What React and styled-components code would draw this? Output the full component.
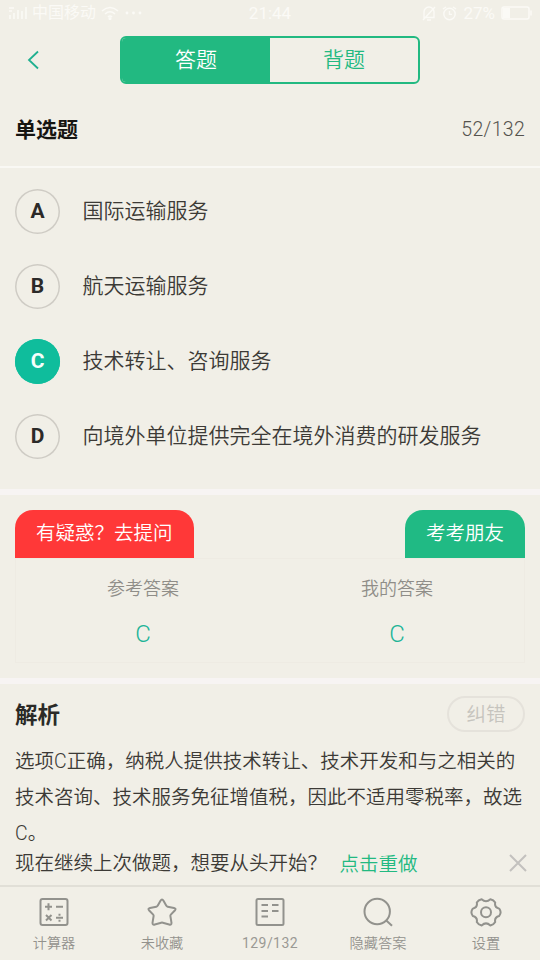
import React from 'react';
import styled, { createGlobalStyle, css } from 'styled-components';

const GlobalStyle = createGlobalStyle`
  * { box-sizing: border-box; }
  body { margin: 0; background: #f1efe7; }
`;

const Screen = styled.div`
  width: 540px;
  height: 960px;
  display: flex;
  flex-direction: column;
  overflow: hidden;
  background: #f1efe7;
  color: #3c3a36;
  font-family: 'Noto Sans CJK SC', sans-serif;
  font-weight: 350;
  white-space: nowrap;
`;

const StatusBar = styled.div`
  height: 28px;
  flex: none;
  display: grid;
  grid-template-columns: 1fr auto 1fr;
  align-items: center;
  padding: 0 8px 2px 8px;
  color: #fbfaf6;
  font-family: Roboto, 'Noto Sans CJK SC', sans-serif;
  font-size: 17px;
  font-weight: 400;
  line-height: 26px;
`;

const StatusGroup = styled.div`
  display: flex;
  align-items: center;
  gap: ${(p) => p.$gap}px;
  justify-content: ${(p) => (p.$end ? 'flex-end' : 'flex-start')};
`;

const Carrier = styled.span`
  font-size: 16px;
`;

const NavBar = styled.div`
  height: 64px;
  flex: none;
  display: grid;
  grid-template-columns: 120px 300px 120px;
  padding-top: 8px;
`;

const BackButton = styled.div`
  height: 48px;
  display: flex;
  align-items: center;
  padding-left: 26px;
`;

const Segments = styled.div`
  height: 48px;
  display: grid;
  grid-template-columns: 1fr 1fr;
  border: 2px solid #22b981;
  border-radius: 6px;
  overflow: hidden;
`;

const Segment = styled.div`
  text-align: center;
  font-size: 21px;
  line-height: 40px;
  ${(p) =>
    p.$active
      ? css`
          background: #22b981;
          color: #fff;
        `
      : css`
          color: #22b981;
        `}
`;

const QuestionHeader = styled.div`
  height: 76px;
  flex: none;
  display: flex;
  justify-content: space-between;
  padding: 0 15px;
  border-bottom: 2px solid #f9f8f4;
  line-height: 73px;
`;

const QuestionType = styled.h1`
  margin: 0;
  font-size: 21px;
  font-weight: 700;
  color: #161512;
`;

const Progress = styled.span`
  font-family: Roboto, sans-serif;
  font-size: 19.5px;
  font-weight: 350;
  letter-spacing: 0.3px;
  line-height: 75px;
  color: #55534e;
`;

const Options = styled.div`
  height: 321px;
  flex: none;
  padding-top: 6px;
`;

const Option = styled.div`
  height: 75px;
  display: flex;
  align-items: center;
  gap: 22.5px;
  padding-left: 15px;
`;

const Letter = styled.div`
  width: 45px;
  height: 45px;
  border-radius: 50%;
  box-shadow: inset 0 0 0 1.5px ${(p) => (p.$selected ? '#0fbd9c' : '#cfccc5')};
  background: ${(p) => (p.$selected ? '#0fbd9c' : 'transparent')};
  color: ${(p) => (p.$selected ? '#f5fffb' : '#2c2a28')};
  font-family: Roboto, sans-serif;
  font-size: 21px;
  font-weight: 700;
  line-height: 44px;
  text-align: center;
`;

const OptionText = styled.span`
  font-size: 21px;
  line-height: 30px;
  padding-bottom: 5px;
`;

const Divider = styled.div`
  height: 6px;
  flex: none;
  background: #f7f4f3;
`;

const AnswerSection = styled.div`
  height: 183px;
  flex: none;
  padding: 15px;
`;

const TabRow = styled.div`
  height: 48px;
  display: flex;
  justify-content: space-between;
`;

const Tab = styled.div`
  width: ${(p) => p.$width}px;
  border-radius: 18px 18px 0 0;
  background: ${(p) => p.$color};
  color: #fff;
  font-size: 19.5px;
  line-height: 43px;
  text-align: center;
`;

const AnswerBox = styled.div`
  height: 105px;
  display: grid;
  grid-template-columns: 1fr 1fr;
  border: 1px solid #eeebe3;
`;

const AnswerCell = styled.div`
  display: flex;
  flex-direction: column;
  align-items: center;
  padding-top: 8px;
`;

const AnswerLabel = styled.span`
  font-size: 18px;
  line-height: 40px;
  color: #8f8d88;
`;

const AnswerValue = styled.span`
  font-family: Roboto, sans-serif;
  font-size: 24px;
  font-weight: 350;
  line-height: 54px;
  color: #20b497;
`;

const Explanation = styled.div`
  height: 158px;
  flex: none;
  padding: 12px 15px 0;
`;

const ExplanationHeader = styled.div`
  display: flex;
  justify-content: space-between;
  height: 46px;
`;

const ExplanationTitle = styled.h2`
  margin: 0;
  font-size: 22.5px;
  font-weight: 700;
  line-height: 34px;
  color: #2b2a27;
`;

const ReportButton = styled.div`
  width: 78px;
  height: 36px;
  border: 2px solid #e5e2db;
  border-radius: 18px;
  color: #c6c4be;
  font-size: 19.5px;
  line-height: 30px;
  text-align: center;
`;

const Body = styled.p`
  margin: 0;
  font-size: 19.5px;
  line-height: 36px;
`;

const Latin = styled.span`
  font-family: Roboto, sans-serif;
  font-weight: 350;
  line-height: 1;
`;

const ResumeBar = styled.div`
  height: 43px;
  flex: none;
  display: flex;
  align-items: center;
  padding: 0 13px 4px 15px;
  font-size: 19.5px;
  line-height: 38px;
`;

const RestartLink = styled.span`
  margin-left: 12.5px;
  padding-top: 3px;
  color: #22b981;
`;

const CloseIcon = styled.svg`
  margin-left: auto;
  margin-top: 2px;
`;

const TabBar = styled.div`
  height: 75px;
  flex: none;
  display: grid;
  grid-template-columns: repeat(5, 1fr);
  border-top: 2px solid #e1dfd7;
`;

const TabItem = styled.div`
  display: flex;
  flex-direction: column;
  align-items: center;
  padding-top: 9px;
`;

const TabLabel = styled.span`
  font-family: ${(p) => (p.$latin ? 'Roboto' : "'Noto Sans CJK SC'")}, sans-serif;
  font-size: ${(p) => (p.$latin ? 14 : 14.2)}px;
  font-weight: ${(p) => (p.$latin ? 400 : 350)};
  letter-spacing: ${(p) => (p.$latin ? 0.45 : 0)}px;
  line-height: ${(p) => (p.$latin ? 26 : 24)}px;
  margin-top: 2px;
  color: ${(p) => (p.$latin ? '#9a9994' : '#93928d')};
`;

const Icon = ({ children }) => (
  <svg width="32" height="32" viewBox="0 0 32 32" fill="none" stroke="#92928d" strokeWidth="2" strokeLinejoin="round">
    {children}
  </svg>
);

const icons = {
  calculator: (
    <Icon>
      <rect x="2.5" y="3" width="27" height="26" rx="2" />
      <path d="M7 10.8h7M10.5 7.3v7M18 10.8h7M8 19l5.5 5.5M13.5 19L8 24.5M18 21.8h7" />
      <path d="M21.5 17.8v2M21.5 23.8v2" />
    </Icon>
  ),
  star: (
    <Icon>
      <path d="M14.5 4.8Q16 2.4 17.5 4.8L20.2 9.6Q20.7 10.5 21.7 10.7L28 11.9Q30.6 12.6 28.8 14.5L24.8 18.6Q24.2 19.3 24.4 20.2L25.5 26.8Q25.5 29.4 23.2 28.5L16.8 26.7Q16 26.5 15.2 26.7L8.8 28.5Q6.5 29.4 6.5 26.8L7.6 20.2Q7.8 19.3 7.2 18.6L3.2 14.5Q1.4 12.6 4 11.9L10.3 10.7Q11.3 10.5 11.8 9.6Z" />
    </Icon>
  ),
  sheet: (
    <Icon>
      <rect x="2.5" y="3" width="27" height="26" rx="1.5" />
      <path d="M7.5 9h6.5M7.5 15h6.5M7.5 20.5h6.5M18 9h6.5M18 15h6.5" />
    </Icon>
  ),
  search: (
    <Icon>
      <circle cx="15.2" cy="15.5" r="12.7" />
      <path d="M24 24.2l6 5.5" />
    </Icon>
  ),
  gear: (
    <Icon>
      <circle cx="16" cy="16.3" r="5" />
      <path d="M11.6 3.2Q16 7.2 20.4 3.2Q23.6 3.8 25.2 6.6Q24.2 11.2 29.2 12.6Q32 16.3 29.2 20Q24.2 21.4 25.2 26Q23.6 28.8 20.4 29.4Q16 25.4 11.6 29.4Q8.4 28.8 6.8 26Q7.8 21.4 2.8 20Q0 16.3 2.8 12.6Q7.8 11.2 6.8 6.6Q8.4 3.8 11.6 3.2Z" />
    </Icon>
  ),
};

const options = [
  ['A', '国际运输服务'],
  ['B', '航天运输服务'],
  ['C', '技术转让、咨询服务'],
  ['D', '向境外单位提供完全在境外消费的研发服务'],
];

const tabs = [
  ['calculator', '计算器'],
  ['star', '未收藏'],
  ['sheet', '129/132'],
  ['search', '隐藏答案'],
  ['gear', '设置'],
];

export default function App() {
  return (
    <Screen>
      <GlobalStyle />
      <StatusBar>
        <StatusGroup $gap={5}>
          <svg width="19" height="14" viewBox="0 0 19 14" fill="none" stroke="currentColor" strokeWidth="1.6">
            <path d="M1 2h5M1 5h3M2 9v4M6 7v6M10 4v9M14 5v8M18 1v12" />
          </svg>
          <Carrier>中国移动</Carrier>
          <svg width="18" height="14" viewBox="0 0 18 14" fill="none" stroke="currentColor" strokeWidth="1.6">
            <path d="M1 5q8-7 16 0M4 8q5-4.5 10 0M7 11q2-2 4 0" />
            <circle cx="9" cy="12.5" r="0.8" />
          </svg>
          <svg width="18" height="4" viewBox="0 0 18 4" fill="currentColor">
            <circle cx="3" cy="2" r="1.4" />
            <circle cx="9.5" cy="2" r="1.4" />
            <circle cx="16" cy="2" r="1.4" />
          </svg>
        </StatusGroup>
        <span>21:44</span>
        <StatusGroup $gap={6} $end>
          <svg width="14" height="15" viewBox="0 0 14 15" fill="none" stroke="currentColor" strokeWidth="1.4">
            <path d="M2 11.5V6a5 5 0 0 1 10 0v5.5zM5 14h4M13 1L1 14" />
          </svg>
          <svg width="15" height="15" viewBox="0 0 15 15" fill="none" stroke="currentColor" strokeWidth="1.4">
            <circle cx="7.5" cy="8" r="5.7" />
            <path d="M7.5 5v3.4H10M1 3l3-2M14 3l-3-2" />
          </svg>
          <span>27%</span>
          <svg width="31" height="14" viewBox="0 0 31 14" fill="none" stroke="currentColor" strokeWidth="1.5">
            <rect x="1" y="1" width="27" height="12" rx="2" />
            <rect x="2" y="2" width="7" height="10" fill="currentColor" stroke="none" />
            <path d="M30 4.5v5" />
          </svg>
        </StatusGroup>
      </StatusBar>
      <NavBar>
        <BackButton>
          <svg width="14" height="20" viewBox="0 0 14 20" fill="none" stroke="#20b090" strokeWidth="1.8">
            <path d="M12 1.5L3 10l9 8.5" />
          </svg>
        </BackButton>
        <Segments>
          <Segment $active>答题</Segment>
          <Segment>背题</Segment>
        </Segments>
      </NavBar>
      <QuestionHeader>
        <QuestionType>单选题</QuestionType>
        <Progress>52/132</Progress>
      </QuestionHeader>
      <Options>
        {options.map(([letter, text]) => (
          <Option key={letter}>
            <Letter $selected={letter === 'C'}>{letter}</Letter>
            <OptionText>{text}</OptionText>
          </Option>
        ))}
      </Options>
      <Divider />
      <AnswerSection>
        <TabRow>
          <Tab $width={178.5} $color="#ff3838">有疑惑？去提问</Tab>
          <Tab $width={120} $color="#20ba84">考考朋友</Tab>
        </TabRow>
        <AnswerBox>
          <AnswerCell>
            <AnswerLabel>参考答案</AnswerLabel>
            <AnswerValue>C</AnswerValue>
          </AnswerCell>
          <AnswerCell>
            <AnswerLabel>我的答案</AnswerLabel>
            <AnswerValue>C</AnswerValue>
          </AnswerCell>
        </AnswerBox>
      </AnswerSection>
      <Divider />
      <Explanation>
        <ExplanationHeader>
          <ExplanationTitle>解析</ExplanationTitle>
          <ReportButton>纠错</ReportButton>
        </ExplanationHeader>
        <Body>
          选项<Latin>C</Latin>正确，纳税人提供技术转让、技术开发和与之相关的
          <br />
          技术咨询、技术服务免征增值税，因此不适用零税率，故选
          <br />
          <Latin>C</Latin>。
        </Body>
      </Explanation>
      <ResumeBar>
        <span>现在继续上次做题，想要从头开始？</span>
        <RestartLink>点击重做</RestartLink>
        <CloseIcon width="18" height="18" viewBox="0 0 18 18" fill="none" stroke="#c3c1be" strokeWidth="2">
          <path d="M1 1l16 16M17 1L1 17" />
        </CloseIcon>
      </ResumeBar>
      <TabBar>
        {tabs.map(([icon, label]) => (
          <TabItem key={icon}>
            {icons[icon]}
            <TabLabel $latin={icon === 'sheet'}>{label}</TabLabel>
          </TabItem>
        ))}
      </TabBar>
    </Screen>
  );
}
